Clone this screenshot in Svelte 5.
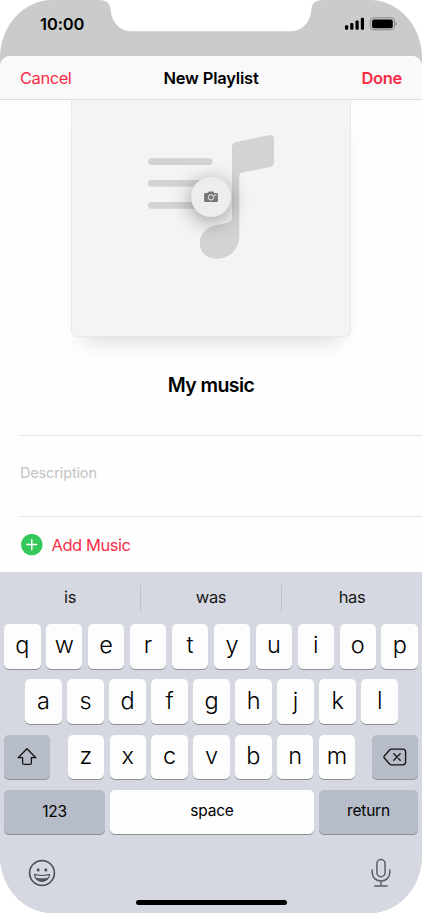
<script>
  const suggestions = ['is', 'was', 'has'];
  const top = [...'qwertyuiop'];
  const home = [...'asdfghjkl'];
  const bottom = [...'zxcvbnm'];
</script>

<main class="phone">
  <header class="status">
    <span class="time">10:00</span>
    <svg class="signals" width="54" height="16" viewBox="0 0 54 16" aria-hidden="true">
      <rect x="1" y="9.3" width="3.2" height="4.5" rx="1" />
      <rect x="6.2" y="7" width="3.2" height="6.8" rx="1" />
      <rect x="11.5" y="4.4" width="3.2" height="9.4" rx="1" />
      <rect x="16.8" y="1.7" width="3.2" height="12.1" rx="1" />
      <rect x="26.3" y="1.8" width="24.2" height="12" rx="3.5" fill="none" stroke="#858585" stroke-width="1" />
      <rect x="28" y="3.400" width="20.800" height="8.800" rx="2" />
      <path d="M51.6 5.8c1.3.4 1.5 3.4 0 4z" fill="#858585" />
    </svg>
    <svg class="notch" width="224" height="32" viewBox="0 0 224 32" aria-hidden="true">
      <path d="M0 0H224C216 0 213 3.5 212.300 10C211.500 22 203 31.200 192 31.200H32C21 31.200 12.500 22 11.700 10C11 3.500 8 0 0 0Z" fill="#fff" />
    </svg>
  </header>

  <section class="sheet">
    <nav class="bar">
      <button class="cancel">Cancel</button>
      <h1>New Playlist</h1>
      <button class="done">Done</button>
    </nav>

    <div class="cover-area">
      <div class="cover">
        <svg width="280" height="237" viewBox="71 100 280 237" aria-hidden="true">
          <g fill="#d3d3d3">
            <rect x="148" y="158.200" width="64.500" height="6.800" rx="3.400" />
            <rect x="148" y="180" width="64.500" height="6.800" rx="3.400" />
            <rect x="148" y="201.900" width="64.500" height="6.800" rx="3.400" />
            <path d="M232 147.300Q232 143 236.300 142L268.500 135.200Q274 134.300 274 139.500V162Q274 166 270 167L242.500 172.600Q239.300 173.300 239.300 176.500V235C239.300 249 230 258.700 216.500 258.700C206.500 258.700 199.800 252 199.800 242.800C199.800 233.500 206.500 226.800 216.500 225L226.500 223Q232 222 232 217.500Z" />
          </g>
        </svg>
        <button class="camera" aria-label="Choose photo">
          <svg width="14" height="12" viewBox="0 0 14 12">
            <path d="M1.300 2H3.700L4.600 .8Q4.900 .4 5.400 .4H8.600Q9.100 .4 9.400 .8L10.300 2H12.700Q13.900 2 13.900 3.200V9.900Q13.900 11.100 12.700 11.100H1.300Q.1 11.100 .1 9.900V3.200Q.1 2 1.300 2Z" fill="#777" />
            <circle cx="7" cy="6.400" r="2.700" fill="none" stroke="#ededed" stroke-width="1" />
            <path d="M10.300 4.200H11.900" stroke="#ededed" stroke-width="1" stroke-linecap="round" />
          </svg>
        </button>
      </div>
    </div>

    <h2>My music</h2>
    <div class="description"><span>Description</span></div>
    <div class="add">
      <svg width="22" height="22" viewBox="0 0 22 22" aria-hidden="true">
        <circle cx="10.800" cy="10.600" r="10.700" fill="#34c759" />
        <path d="M10.800 5.700V15.500M5.900 10.600H15.700" stroke="#fff" stroke-width="1.500" stroke-linecap="round" />
      </svg>
      <span>Add Music</span>
    </div>
  </section>

  <section class="keyboard">
    <div class="suggestions">
      {#each suggestions as word}<span>{word}</span>{/each}
    </div>
    <div class="row">
      {#each top as letter}<button class="key">{letter}</button>{/each}
    </div>
    <div class="row home">
      {#each home as letter}<button class="key">{letter}</button>{/each}
    </div>
    <div class="row third">
      <button class="key dark side" aria-label="Shift">
        <svg width="22" height="20" viewBox="0 0 22 20">
          <path d="M11 1.800L19.800 10.700H15.400V15.900Q15.400 17.400 13.900 17.400H8.100Q6.600 17.400 6.600 15.900V10.700H2.200Z" fill="none" stroke="#111" stroke-width="1.300" stroke-linejoin="round" />
        </svg>
      </button>
      <div class="letters">
        {#each bottom as letter}<button class="key">{letter}</button>{/each}
      </div>
      <button class="key dark side" aria-label="Delete">
        <svg width="24" height="18" viewBox="0 0 24 18">
          <path d="M8.300 1.200H19.700Q22.600 1.200 22.600 4.100V13.900Q22.600 16.800 19.700 16.800H8.300Q7.300 16.800 6.600 16L1.300 10Q.5 9 1.300 8L6.600 2Q7.300 1.200 8.300 1.200Z" fill="none" stroke="#111" stroke-width="1.300" />
          <path d="M10.800 5.800L17.200 12.200M17.200 5.800L10.800 12.200" stroke="#111" stroke-width="1.300" stroke-linecap="round" />
        </svg>
      </button>
    </div>
    <div class="row fourth">
      <button class="key dark word numbers">123</button>
      <button class="key word space">space</button>
      <button class="key dark word return">return</button>
    </div>
    <footer>
      <svg width="28" height="28" viewBox="0 0 28 28" aria-hidden="true">
        <circle cx="14" cy="14" r="12.400" fill="none" stroke="#50535a" stroke-width="1.700" />
        <ellipse cx="10.200" cy="10.900" rx="1.500" ry="1.700" fill="#50535a" />
        <ellipse cx="17.800" cy="10.900" rx="1.500" ry="1.700" fill="#50535a" />
        <path d="M5.800 14.800Q14 17 22.300 14.800C21.900 19.800 18.600 22.900 14 22.900S6.200 19.800 5.800 14.800Z" fill="#50535a" />
        <path d="M7.100 16.200Q14 17.800 21 16.200L20.200 18.400Q14 20.200 7.900 18.400Z" fill="#d6d9e1" />
      </svg>
      <svg width="20" height="30" viewBox="0 0 20 30" aria-hidden="true">
        <g fill="none" stroke="#5b5e66" stroke-width="1.500" stroke-linecap="round">
          <rect x="5.900" y="1.500" width="8.200" height="17.200" rx="4.100" />
          <path d="M1.200 12V14.500C1.200 19.500 4.800 23 10 23S18.800 19.500 18.800 14.500V12M10 23V28M3.800 28H16.200" />
        </g>
      </svg>
    </footer>
    <div class="indicator"></div>
  </section>
</main>

<style>
  :global(body) { background: #fff; }
  * { box-sizing: border-box; }
  .phone {
    width: 422px; height: 913px; overflow: hidden; display: flex; flex-direction: column;
    background: #cbcbcb; border-radius: 52px / 58px; color: #000;
    font-family: Inter, "Liberation Sans", sans-serif;
  }
  button { border: 0; padding: 0; margin: 0; background: none; font: inherit; color: inherit; }
  h1, h2 { margin: 0; }
  svg { display: block; flex: none; }
  .status { position: relative; height: 56px; flex: none; display: flex; justify-content: space-between; padding: 14px 24px 0 40px; }
  .time { font-size: 16.500px; line-height: 20px; font-weight: 600; letter-spacing: -.1px; }
  .signals { margin-top: 2px; }
  .notch { position: absolute; left: 99px; top: 0; }
  .sheet { height: 516px; flex: none; background: #fefefe; border-radius: 10px 10px 0 0; overflow: hidden; }
  .bar { position: relative; z-index: 1; height: 44px; display: grid; grid-template-columns: 1fr auto 1fr; align-items: center; padding: 0 20px; background: #f9f9f9; border-bottom: 1px solid #dcdcdc; font-size: 16.500px; }
  .bar h1 { font-size: 16.500px; font-weight: 600; letter-spacing: -.2px; }
  .cancel { justify-self: start; color: #fa2d48; letter-spacing: -.45px; }
  .done { justify-self: end; color: #fa2d48; font-weight: 600; letter-spacing: -.3px; }
  .cover-area { height: 237px; padding: 0 71px; }
  .cover { position: relative; width: 280px; height: 237px; background: #f4f4f4; border: solid #e9e9e9; border-width: 0 1px 1px; border-radius: 0 0 6px 6px; box-shadow: 0 18px 18px -12px rgba(0,0,0,.12), 0 2px 24px rgba(0,0,0,.015); }
  .cover > svg { margin-left: -1px; }
  .camera { position: absolute; left: 119px; top: 76.500px; width: 40px; height: 40px; border-radius: 50%; background: #ededed; display: grid; place-items: center; box-shadow: 0 4px 20px rgba(0,0,0,.38); }
  h2 { height: 98px; padding-top: 36px; line-height: 24px; font-size: 19.500px; font-weight: 600; text-align: center; letter-spacing: -.6px; }
  .description { height: 82px; margin-left: 20px; border: solid #e5e5e5; border-width: 1px 0; display: flex; align-items: center; padding-bottom: 8px; font-size: 14.500px; letter-spacing: -.15px; color: #c4c4c6; }
  .add { display: flex; align-items: center; height: 55px; padding-left: 21px; gap: 8.500px; color: #fa2d48; font-size: 16.500px; letter-spacing: -.45px; }
  .keyboard { height: 341px; flex: none; background: #d5d8e0; }
  .suggestions { height: 52px; padding: 12.500px 0; display: grid; grid-template-columns: 140px 141px 141px; font-size: 16.500px; line-height: 25px; letter-spacing: -.35px; text-align: center; color: #161616; }
  .suggestions span + span { border-left: 1px solid #bdc1ca; }
  .row { display: flex; gap: 5.400px; height: 44.300px; margin: 0 4px 11px; }
  .home { padding: 0 20px 0 21.200px; }
  .key { flex: 1; min-width: 0; height: 44.500px; border-radius: 5px; background: #fdfdfe; box-shadow: 0 1px 0 #8e9095; display: flex; align-items: center; justify-content: center; padding-bottom: 2px; font-size: 23.500px; font-weight: 350; line-height: 30px; }
  .third { justify-content: space-between; gap: 0; }
  .letters { display: flex; gap: 5.400px; width: 287.500px; margin-left: 1px; }
  .dark { background: #b6bcc8; }
  .side { flex: 0 0 46px; padding: 0; }
  .word { font-size: 15.500px; font-weight: 400; letter-spacing: -.2px; }
  .fourth { gap: 5px; }
  .numbers { flex: 0 0 101px; padding-bottom: 0; }
  .return { flex: 0 0 99px; }
  footer { display: flex; justify-content: space-between; align-items: center; height: 50px; padding: 0 31px 0 28px; margin-top: 14px; }
  .indicator { width: 151px; height: 5px; border-radius: 3px; background: #000; margin: 2px auto 0; }
</style>
